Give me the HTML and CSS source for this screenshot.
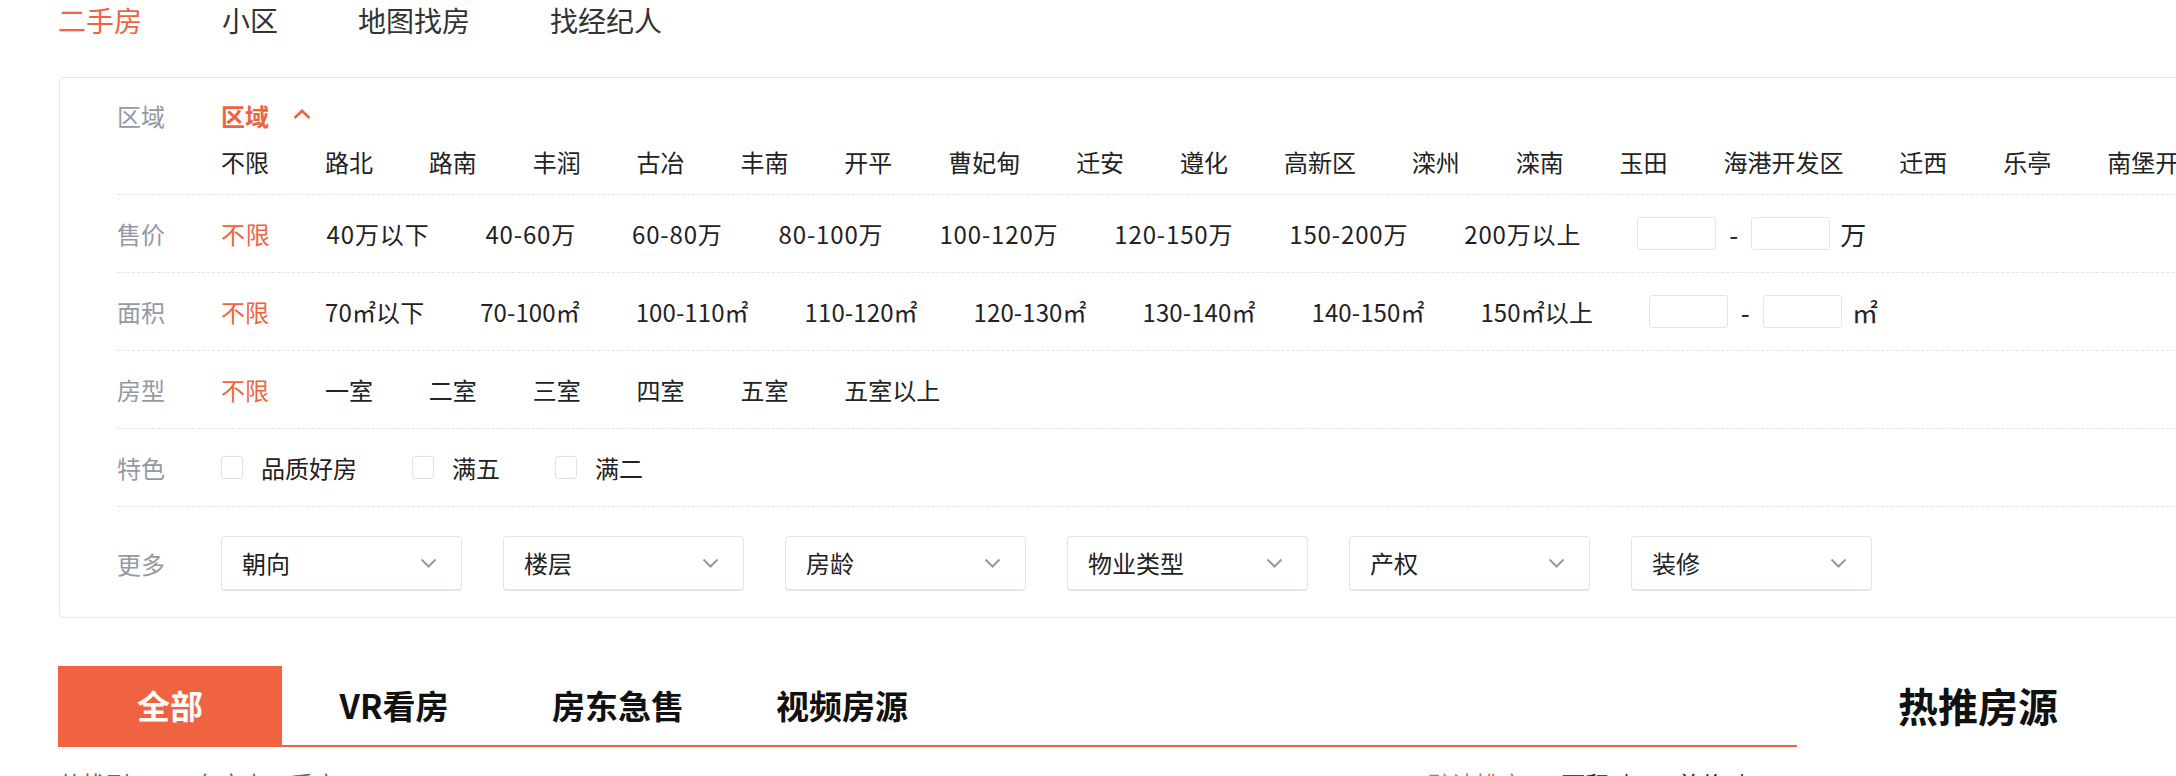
FILE: index.html
```html
<!DOCTYPE html>
<html lang="zh-CN">
<head>
    <meta charset="UTF-8">
    <title>唐山二手房</title>
    <link rel="stylesheet" href="styles.css">
</head>
<body>
    <div class="page">
        <nav class="nav">
            <a class="nav__item nav__item--active">二手房</a>
            <a class="nav__item">小区</a>
            <a class="nav__item">地图找房</a>
            <a class="nav__item">找经纪人</a>
        </nav>

        <div class="filter">
            <div class="filter__row filter__row--region">
                <div class="filter__label">区域</div>
                <div class="filter__body">
                    <div class="filter__sub">
                        <span>区域</span>
                        <svg class="filter__arrow" width="18" height="10" viewBox="0 0 18 10"><polyline points="1.5,9 9,1.8 16.5,9" fill="none" stroke="#ef6341" stroke-width="2.6"/></svg>
                    </div>
                    <ul class="filter__list">
                        <li>不限</li><li>路北</li><li>路南</li><li>丰润</li><li>古冶</li><li>丰南</li><li>开平</li><li>曹妃甸</li><li>迁安</li><li>遵化</li><li>高新区</li><li>滦州</li><li>滦南</li><li>玉田</li><li>海港开发区</li><li>迁西</li><li>乐亭</li><li>南堡开发区</li><li>芦台开发区</li>
                    </ul>
                </div>
            </div>

            <div class="filter__row">
                <div class="filter__label">售价</div>
                <ul class="filter__list filter__list--price">
                    <li class="is-active">不限</li><li>40万以下</li><li>40-60万</li><li>60-80万</li><li>80-100万</li><li>100-120万</li><li>120-150万</li><li>150-200万</li><li>200万以上</li>
                </ul>
                <div class="range">
                    <input class="range__input" type="text">
                    <span class="range__dash">-</span>
                    <input class="range__input" type="text">
                    <span class="range__unit">万</span>
                </div>
            </div>

            <div class="filter__row">
                <div class="filter__label">面积</div>
                <ul class="filter__list filter__list--area">
                    <li class="is-active">不限</li><li>70㎡以下</li><li>70-100㎡</li><li>100-110㎡</li><li>110-120㎡</li><li>120-130㎡</li><li>130-140㎡</li><li>140-150㎡</li><li>150㎡以上</li>
                </ul>
                <div class="range">
                    <input class="range__input" type="text">
                    <span class="range__dash">-</span>
                    <input class="range__input" type="text">
                    <span class="range__unit">㎡</span>
                </div>
            </div>

            <div class="filter__row">
                <div class="filter__label">房型</div>
                <ul class="filter__list">
                    <li class="is-active">不限</li><li>一室</li><li>二室</li><li>三室</li><li>四室</li><li>五室</li><li>五室以上</li>
                </ul>
            </div>

            <div class="filter__row">
                <div class="filter__label">特色</div>
                <ul class="filter__list">
                    <li class="check"><span class="check__box"></span>品质好房</li>
                    <li class="check"><span class="check__box"></span>满五</li>
                    <li class="check"><span class="check__box"></span>满二</li>
                </ul>
            </div>

            <div class="filter__row filter__row--more">
                <div class="filter__label">更多</div>
                <div class="selects">
                    <div class="select">朝向<svg width="17" height="10" viewBox="0 0 17 10"><polyline points="1.5,1.5 8.5,8.5 15.5,1.5" fill="none" stroke="#999" stroke-width="2"/></svg></div>
                    <div class="select">楼层<svg width="17" height="10" viewBox="0 0 17 10"><polyline points="1.5,1.5 8.5,8.5 15.5,1.5" fill="none" stroke="#999" stroke-width="2"/></svg></div>
                    <div class="select">房龄<svg width="17" height="10" viewBox="0 0 17 10"><polyline points="1.5,1.5 8.5,8.5 15.5,1.5" fill="none" stroke="#999" stroke-width="2"/></svg></div>
                    <div class="select">物业类型<svg width="17" height="10" viewBox="0 0 17 10"><polyline points="1.5,1.5 8.5,8.5 15.5,1.5" fill="none" stroke="#999" stroke-width="2"/></svg></div>
                    <div class="select">产权<svg width="17" height="10" viewBox="0 0 17 10"><polyline points="1.5,1.5 8.5,8.5 15.5,1.5" fill="none" stroke="#999" stroke-width="2"/></svg></div>
                    <div class="select">装修<svg width="17" height="10" viewBox="0 0 17 10"><polyline points="1.5,1.5 8.5,8.5 15.5,1.5" fill="none" stroke="#999" stroke-width="2"/></svg></div>
                </div>
            </div>
        </div>

        <div class="content">
            <div class="listing">
                <div class="tabs">
                    <a class="tabs__item tabs__item--active">全部</a>
                    <a class="tabs__item">VR看房</a>
                    <a class="tabs__item">房东急售</a>
                    <a class="tabs__item">视频房源</a>
                </div>
                <div class="sortbar">
                    <div class="sortbar__total">共找到 2864 套唐山二手房</div>
                    <div class="sortbar__sorts">
                        <span class="sortbar__sort sortbar__sort--active">默认排序</span>
                        <span class="sortbar__sort">面积 ↓</span>
                        <span class="sortbar__sort">总价 ↓</span>
                    </div>
                </div>
            </div>
            <aside class="side">
                <h2 class="side__title">热推房源</h2>
            </aside>
        </div>
    </div>
</body>
</html>
```

FILE: styles.css
```css
* {
    box-sizing: border-box;
}
html,
body {
    overflow: hidden;
}
body {
    margin: 0;
    padding: 0;
    background: #ffffff;
    color: #222222;
    font-family: "Noto Sans CJK SC", "Noto Sans", sans-serif;
}
ul {
    margin: 0;
    padding: 0;
    list-style: none;
}
.page {
    width: 2500px;
    padding-left: 58px;
}

/* top nav */
.nav {
    display: flex;
    height: 41px;
    line-height: 41px;
    font-size: 28px;
}
.nav__item {
    margin-right: 80px;
    color: #333333;
}
.nav__item--active {
    color: #ef6341;
}

/* filter card */
.filter {
    margin: 36px 0 0 1px;
    border: 1px solid #e4e7ec;
    border-radius: 4px;
    padding-left: 57px;
    font-size: 24px;
    line-height: 36px;
}
.filter__row {
    display: flex;
    align-items: center;
    height: 78px;
    border-bottom: 1px dashed #e1e4e9;
    white-space: nowrap;
}
.filter__row--region {
    align-items: flex-start;
    height: 117px;
    padding-top: 20px;
}
.filter__row--more {
    height: auto;
    padding: 29px 0 26px;
    border-bottom: none;
}
.filter__label {
    width: 104px;
    flex-shrink: 0;
    color: #9399a5;
}
.filter__sub {
    display: flex;
    align-items: center;
    color: #ef6341;
    font-weight: 700;
}
.filter__arrow {
    margin-left: 24px;
    margin-top: -4px;
}
.filter__list {
    display: flex;
}
.filter__row--region .filter__list {
    margin-top: 10px;
}
.filter__list li {
    margin-right: 55.9px;
    flex-shrink: 0;
}
.filter__list li.is-active {
    color: #ef6341;
}
.filter__list--price li {
    letter-spacing: 0.85px;
}
.filter__list--area li {
    letter-spacing: 0.1px;
}

/* price / area range */
.range {
    display: flex;
    align-items: center;
}
.range__input {
    width: 79px;
    height: 33px;
    border: 1px solid #e2e5ea;
    border-radius: 3px;
    outline: none;
    font-size: 18px;
}
.range__dash {
    width: 35px;
    text-align: center;
    font-size: 26px;
}
.range__unit {
    margin-left: 10px;
    font-size: 26px;
}

/* checkboxes */
.check {
    display: flex;
    align-items: center;
}
.filter__list li.check {
    margin-right: 55px;
}
.check__box {
    width: 22px;
    height: 23px;
    margin-right: 18px;
    border: 1px solid #dfe2e8;
    border-radius: 3px;
}

/* dropdowns */
.selects {
    display: flex;
}
.select {
    display: flex;
    align-items: center;
    justify-content: space-between;
    width: 241px;
    height: 55px;
    margin-right: 41px;
    padding: 0 24px 0 20px;
    border: 1px solid #e2e5ea;
    border-bottom-width: 2px;
    border-radius: 4px;
}

/* listing */
.content {
    display: flex;
    margin-top: 48px;
}
.listing {
    width: 1739px;
}
.tabs {
    display: flex;
    border-bottom: 2px solid #ef6341;
}
.tabs__item {
    width: 224px;
    height: 79px;
    line-height: 79px;
    text-align: center;
    font-size: 33px;
    font-weight: 700;
    color: #111111;
}
.tabs__item--active {
    background: #ef6341;
    color: #ffffff;
}
.sortbar {
    display: flex;
    justify-content: space-between;
    margin-top: 19px;
    font-size: 24px;
    line-height: 36px;
}
.sortbar__total {
    color: #666666;
}
.sortbar__sorts {
    display: flex;
    padding-right: 43px;
}
.sortbar__sort {
    margin-left: 38px;
}
.sortbar__sort--active {
    color: #ef6341;
}
.side {
    margin-left: 101px;
}
.side__title {
    margin: 0;
    height: 79px;
    line-height: 79px;
    font-size: 40px;
    font-weight: 700;
    color: #111111;
}
```
